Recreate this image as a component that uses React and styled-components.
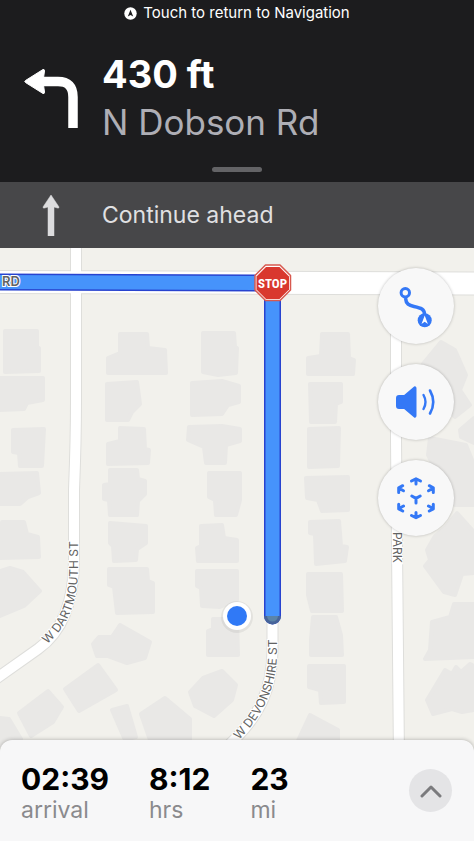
import styled, { createGlobalStyle, css } from 'styled-components';

const GlobalStyle = createGlobalStyle`
  * {
    box-sizing: border-box;
  }
  body {
    margin: 0;
    background: #ffffff;
    font-family: Inter, 'Liberation Sans', sans-serif;
  }
  p {
    margin: 0;
  }
`;

const Screen = styled.div`
  display: flex;
  flex-direction: column;
  min-height: 100vh;
`;

const Banner = styled.header`
  display: flex;
  flex-direction: column;
  align-items: center;
  padding-bottom: 10px;
  background: #1c1c1e;
`;

const ReturnLink = styled.a`
  display: flex;
  align-items: center;
  gap: 6px;
  height: 26px;
  color: #ffffff;
  font-size: 15px;
  line-height: 20px;
  text-decoration: none;
`;

const Step = styled.div`
  display: grid;
  grid-template-columns: 102px 1fr;
  align-items: center;
  width: 100%;
`;

const StepIcon = styled.div`
  display: flex;
  justify-content: center;
`;

const TurnStep = styled(Step)`
  padding: 24px 0 21px;
`;

const Distance = styled.p`
  color: #ffffff;
  font-size: 38px;
  font-weight: 700;
  line-height: 48px;
`;

const Street = styled.p`
  color: #aeaeb5;
  font-size: 35px;
  line-height: 48px;
`;

const Handle = styled.button`
  width: 50px;
  height: 5px;
  padding: 0;
  border: 0;
  border-radius: 3px;
  background: #636366;
`;

const NextStep = styled(Step)`
  height: 66px;
  background: #474749;
  color: #e0e0e2;
  font-size: 23px;
  line-height: 32px;
`;

const MapArea = styled.main`
  display: grid;
  flex: 1;
  min-height: 300px;
  background: #f2f1ec;
`;

const MapDrawing = styled.svg`
  grid-area: 1 / 1;
  width: 100%;
  height: 100%;
  font-family: Inter, sans-serif;
`;

const Controls = styled.div`
  grid-area: 1 / 1;
  display: flex;
  flex-direction: column;
  gap: 20px;
  justify-self: end;
  align-self: start;
  padding: 20px;
  z-index: 1;
`;

const round = css`
  display: flex;
  align-items: center;
  justify-content: center;
  padding: 0;
  border: 0;
  border-radius: 50%;
`;

const MapButton = styled.button`
  ${round}
  width: 76px;
  height: 76px;
  background: #f8f8f8;
  box-shadow: 0 0 3px rgba(0, 0, 0, 0.25);
`;

const Sheet = styled.footer`
  display: flex;
  align-items: center;
  justify-content: space-between;
  height: 103px;
  margin-top: -12px;
  padding: 0 22px 0 21px;
  border-bottom: 2px solid #ffffff;
  border-radius: 12px 12px 0 0;
  background: #f7f7f8;
  box-shadow: 0 0 4px rgba(0, 0, 0, 0.3);
  z-index: 1;
`;

const Stats = styled.div`
  display: flex;
  gap: 40px;
  padding-top: 2px;
`;

const Value = styled.p`
  color: #000000;
  font-size: 30px;
  font-weight: 700;
  line-height: 36px;
`;

const Unit = styled.p`
  color: #8a8a8d;
  font-size: 23px;
  line-height: 26px;
`;

const ExpandButton = styled.button`
  ${round}
  width: 43px;
  height: 43px;
  background: #e4e4e6;
`;

const buildings = [
  '5,331 37,331 37,347 39,348 39,371 5,372',
  '0,378 43,378 43,400 27,403 24,409 0,410',
  '13,430 44,429 42,466 20,466 19,453 13,452',
  '0,474 37,473 39,493 28,497 20,504 0,504',
  '120,334 147,334 148,348 165,350 166,373 108,373 108,358 120,353',
  '107,384 137,382 140,404 132,412 128,420 107,420',
  '120,428 144,429 145,449 149,450 148,463 108,464 108,444 120,441',
  '110,470 137,470 138,479 145,481 145,494 138,501 137,515 110,515 109,500 104,499 104,485 110,484',
  '203,333 234,333 235,347 237,348 236,373 218,375 203,372',
  '192,383 222,381 239,386 239,402 228,405 222,414 192,415',
  '189,427 222,426 240,429 240,441 226,445 225,463 206,463 204,447 188,440',
  '209,473 240,473 240,500 236,515 216,515 215,500 209,497',
  '2,522 24,522 27,534 38,537 39,557 0,558',
  '0,571 10,568 23,572 40,591 24,606 0,616',
  '110,523 146,526 146,543 137,549 136,560 114,561 113,546 110,543',
  '109,569 147,569 148,581 153,583 153,612 117,613 114,587 109,585',
  '120,625 150,642 145,658 127,663 108,656 97,656 93,644 99,637 112,637',
  '65,689 98,665 116,690 79,711',
  '19,713 48,691 62,707 53,722 31,736',
  '0,718 9,719 21,739 0,745',
  '112,710 127,706 136,737 125,740',
  '141,714 165,698 190,719 190,740 150,740',
  '201,526 222,525 224,538 237,540 237,561 198,561 197,548 201,546',
  '197,571 237,571 237,600 220,607 202,606 201,588 197,586',
  '213,619 237,619 238,655 208,655 208,631 213,629',
  '190,692 203,678 222,671 236,685 232,700 214,716 195,706',
  '322,334 348,334 349,358 354,360 353,374 308,374 308,358 321,356',
  '310,384 341,384 341,402 336,404 335,422 311,422',
  '309,429 339,428 338,466 309,467',
  '306,478 348,477 348,510 322,511 318,500 307,498',
  '310,522 339,521 341,546 347,547 345,561 316,564 315,534 310,533',
  '308,574 341,574 342,611 312,611 308,595',
  '313,617 336,617 341,635 342,655 311,655 311,640',
  '309,666 344,666 344,702 321,703 320,690 309,687',
  '310,715 338,730 338,745 296,745',
  '423,364 441,342 455,350 466,375 460,390 470,405 455,417 440,400',
  '474,418 460,430 461,437 474,443',
  '430,438 466,445 474,465 474,505 455,505 440,480 428,455',
  '427,550 435,536 446,527 457,513 474,532 474,573 462,574 455,595 444,592 425,566 430,560',
  '454,604 474,604 474,657 425,659 430,650 432,622 450,617',
  '427,700 445,670 452,674 456,667 461,672 470,664 474,666 474,710 462,712 452,709 433,714',
];

const roads = [
  { d: 'M76 240V400Q76 440 74 490V560C74 602 62 632 38 649L-10 683', width: 10 },
  { d: 'M396 283V440L399 760', width: 10 },
  { d: 'M272.500 600V650C272.500 690 258 716 236 738L226 748', width: 10 },
  { d: 'M-10 282L484 283.500', width: 22 },
];

const route = 'M-20 282L272.500 283V616';

function Map() {
  return (
    <MapDrawing viewBox="0 248 474 504" preserveAspectRatio="xMidYMin slice" role="img" aria-label="Map">
      <g fill="#e9e8e6" stroke="#e9e8e6" strokeWidth="4" strokeLinejoin="round">
        {buildings.map((points) => (
          <polygon key={points} points={points} />
        ))}
      </g>

      <g fill="none" stroke="#dededb">
        {roads.map((road) => (
          <path key={road.d} d={road.d} strokeWidth={road.width + 2} />
        ))}
      </g>
      <g fill="none" stroke="#ffffff">
        {roads.map((road) => (
          <path key={road.d} d={road.d} strokeWidth={road.width} />
        ))}
      </g>

      <g fill="none" strokeLinecap="round">
        <path d={route} stroke="#2843cf" strokeWidth="17" />
        <path d={route} stroke="#4693fb" strokeWidth="14" />
      </g>
      <path d="M264 616a8.500 8.500 0 0 0 17 0z" fill="#47649a" />
      <path d="M267 616a5.500 5.500 0 0 0 11 0z" fill="#5b84a8" />

      <defs>
        <path id="dartmouth" d="M47 644C66 628 78 605 78 568V520" />
        <path id="devonshire" d="M239 740C262 716 276 690 277 655V620" />
        <path id="park" d="M393 532V600" />
      </defs>
      <g fill="#636363" stroke="#ffffff" strokeWidth="2" paintOrder="stroke" fontSize="12">
        <text>
          <textPath href="#dartmouth">W DARTMOUTH ST</textPath>
        </text>
        <text>
          <textPath href="#devonshire">W DEVONSHIRE ST</textPath>
        </text>
        <text>
          <textPath href="#park">PARK</textPath>
        </text>
        <text x="2" y="286" fontSize="13" fontWeight="600">
          RD
        </text>
      </g>

      {/* stop sign */}
      <g strokeLinejoin="round">
        <path
          d="M265.500 265h14.500l10.500 10.500v14.500l-10.500 10.500h-14.500l-10.500-10.500v-14.500z"
          fill="#fff"
          stroke="#d8594f"
          strokeWidth="1.500"
        />
        <path d="M266 267h13.500l9.500 9.500v13l-9.500 9.500h-13.500l-9.500-9.500v-13z" fill="#d9382e" />
        <text
          x="272.500"
          y="288"
          textAnchor="middle"
          fill="#ffffff"
          fontFamily="'Liberation Sans Narrow', 'Roboto Condensed', Roboto, sans-serif"
          fontSize="13"
          fontWeight="700"
        >
          STOP
        </text>
      </g>

      {/* current position */}
      <circle cx="237" cy="617" r="16" fill="#000000" opacity="0.060" />
      <circle cx="237" cy="616" r="14" fill="#ffffff" />
      <circle cx="237" cy="616" r="10" fill="#3079f6" />
    </MapDrawing>
  );
}

function TurnLeftIcon() {
  return (
    <svg width="54" height="60" viewBox="0 0 54 60" aria-hidden="true">
      <path d="M18 13.500H34Q49 13.500 49 29V60" fill="none" stroke="#ffffff" strokeWidth="9.500" />
      <path
        d="M1.500 12.500L19 1.500Q20.500 1 20.500 3L19 13.500L20.500 24Q20.500 26 19 25.500L1.500 14.500Q0 13.500 1.500 12.500z"
        fill="#ffffff"
        stroke="#ffffff"
        strokeLinejoin="round"
      />
    </svg>
  );
}

function StraightIcon() {
  return (
    <svg width="18" height="42" viewBox="0 0 18 42" aria-hidden="true">
      <path
        d="M9 1L17 13Q17 14.500 15.500 14L12 13V42H6V13L2.500 14Q1 14.500 1 13z"
        fill="#dcdcde"
        stroke="#dcdcde"
        strokeWidth="0.500"
        strokeLinejoin="round"
      />
    </svg>
  );
}

function LocationIcon() {
  return (
    <svg width="13" height="13" viewBox="0 0 13 13" aria-hidden="true">
      <circle cx="6.500" cy="6.500" r="6.200" fill="#ffffff" />
      <path d="M6.500 2.800L9.200 9.400L6.500 7.900L3.800 9.400z" fill="#1c1c1e" />
    </svg>
  );
}

function RouteIcon() {
  return (
    <svg width="76" height="76" fill="none" stroke="#3478f6" strokeWidth="3.500" aria-hidden="true">
      <circle cx="27.300" cy="24.700" r="4.200" strokeWidth="3" />
      <path d="M27.500 30C28 36 31 37.500 36 38.500C43 40 46.500 41 46.700 47" />
      <circle cx="46.700" cy="52.300" r="7" fill="#3478f6" stroke="none" />
      <path d="M46.700 47.500L49.900 56L46.700 53.800L43.500 56z" fill="#ffffff" stroke="none" />
    </svg>
  );
}

function SpeakerIcon() {
  return (
    <svg width="76" height="76" fill="none" stroke="#3478f6" strokeLinecap="round" aria-hidden="true">
      <path
        d="M21 32H26.500L36.500 23.500Q37.500 23 37.500 24.500V51.500Q37.500 53 36.500 52.500L26.500 44H21Q19 44 19 42V34Q19 32 21 32z"
        fill="#3478f6"
        strokeWidth="2"
        strokeLinejoin="round"
      />
      <path d="M45.500 31Q49.500 38 45.500 45" strokeWidth="2.400" />
      <path d="M52 26.500Q58.500 38 52 49.500" strokeWidth="2.600" />
    </svg>
  );
}

function CubeIcon() {
  return (
    <svg
      width="76"
      height="76"
      fill="none"
      stroke="#3478f6"
      strokeWidth="3"
      strokeLinecap="round"
      strokeLinejoin="round"
      aria-hidden="true"
    >
      <path d="M33.500 21L38 18.800L42.500 21M38 19V24" />
      <path d="M33.500 55.500L38 57.700L42.500 55.500M38 57.500V52.500" />
      <path d="M24.700 25.700L20.700 27.800V32.500M21 28.200L25.500 30.700" />
      <path d="M51.300 25.700L55.300 27.800V32.500M55 28.200L50.500 30.700" />
      <path d="M24.700 51L20.700 48.900V44.200M21 48.500L25.500 46" />
      <path d="M51.300 51L55.300 48.900V44.200M55 48.500L50.500 46" />
      <path d="M33.800 36L38 38.400L42.200 36M38 38.400V43" />
    </svg>
  );
}

const stats = [
  { value: '02:39', unit: 'arrival' },
  { value: '8:12', unit: 'hrs' },
  { value: '23', unit: 'mi' },
];

export default function App() {
  return (
    <>
      <GlobalStyle />
      <Screen>
        <Banner>
          <ReturnLink href="#">
            <LocationIcon />
            Touch to return to Navigation
          </ReturnLink>
          <TurnStep>
            <StepIcon>
              <TurnLeftIcon />
            </StepIcon>
            <div>
              <Distance>430 ft</Distance>
              <Street>N Dobson Rd</Street>
            </div>
          </TurnStep>
          <Handle aria-label="Show all steps" />
        </Banner>

        <NextStep>
          <StepIcon>
            <StraightIcon />
          </StepIcon>
          <p>Continue ahead</p>
        </NextStep>

        <MapArea>
          <Map />
          <Controls>
            <MapButton aria-label="Route overview">
              <RouteIcon />
            </MapButton>
            <MapButton aria-label="Sound">
              <SpeakerIcon />
            </MapButton>
            <MapButton aria-label="3D view">
              <CubeIcon />
            </MapButton>
          </Controls>
        </MapArea>

        <Sheet>
          <Stats>
            {stats.map((stat) => (
              <div key={stat.unit}>
                <Value>{stat.value}</Value>
                <Unit>{stat.unit}</Unit>
              </div>
            ))}
          </Stats>
          <ExpandButton aria-label="Expand">
            <svg width="22" height="14" viewBox="0 0 22 14" aria-hidden="true">
              <path
                d="M2 12L11 3L20 12"
                fill="none"
                stroke="#7b7b7e"
                strokeWidth="3"
                strokeLinecap="round"
                strokeLinejoin="round"
              />
            </svg>
          </ExpandButton>
        </Sheet>
      </Screen>
    </>
  );
}
